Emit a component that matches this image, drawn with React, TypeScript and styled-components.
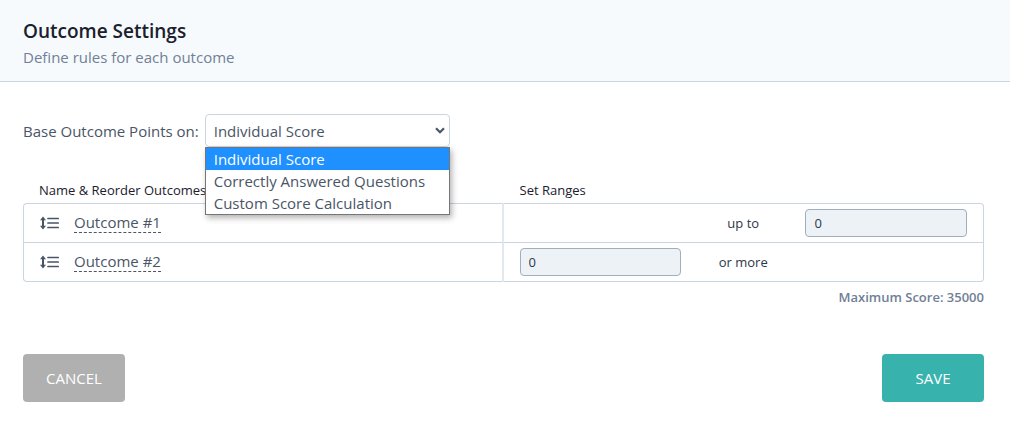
import React, { useState } from "react";
import styled, { createGlobalStyle } from "styled-components";

const GlobalStyle = createGlobalStyle`
  *, *::before, *::after { box-sizing: border-box; }
  body {
    margin: 0;
    background: #fff;
    color: #4a5568;
    font-family: "Segoe UI", "Open Sans", "Noto Sans", sans-serif;
    font-size: 15px;
    line-height: 24px;
  }
  button, input, select { font: inherit; color: inherit; }
`;

const Header = styled.header`
  padding: 18px 24px 12px 23px;
  background: #f6fafd;
  border-bottom: 1px solid #cbd5e0;
`;

const Title = styled.h1`
  margin: 0;
  font-size: 19px;
  line-height: 27px;
  font-weight: 600;
  color: #1a202c;
`;

const Subtitle = styled.p`
  margin: 0;
  color: #718096;
`;

const Content = styled.main`
  padding: 32px 26px 19px 23px;
`;

const Field = styled.div`
  display: flex;
  align-items: center;
  gap: 6px;
`;

const SelectBox = styled.div`
  position: relative;
  width: 245px;
`;

const Select = styled.select`
  display: block;
  appearance: none;
  width: 100%;
  height: 33px;
  padding: 0 24px 0 8px;
  border: 1px solid #cbd5e0;
  border-radius: 4px;
  background: #fff;
  outline: none;
`;

const Chevron = styled.svg`
  position: absolute;
  right: 5px;
  top: 13px;
  pointer-events: none;
`;

const Menu = styled.ul`
  position: absolute;
  z-index: 1;
  top: 100%;
  left: 0;
  right: 0;
  margin: 0;
  padding: 0;
  list-style: none;
  background: #fff;
  border: 1px solid #767676;
  box-shadow: 2px 3px 6px rgba(0, 0, 0, 0.3);
`;

const MenuItem = styled.li<{ $active: boolean }>`
  padding: 0 8px;
  line-height: 22px;
  white-space: nowrap;
  color: ${(p) => (p.$active ? "#fff" : "#4a5568")};
  background: ${(p) => (p.$active ? "#1e90ff" : "#fff")};
`;

const Table = styled.table`
  width: 100%;
  margin-top: 32px;
  table-layout: fixed;
  border-collapse: separate;
  border-spacing: 0;
`;

const HeadCell = styled.th`
  padding: 0 16px 2px;
  height: 24px;
  text-align: left;
  font-size: 13px;
  line-height: 20px;
  font-weight: 500;
  color: #1a202c;
`;

const Row = styled.tr`
  & > td { border-top: 1px solid #cbd5e0; }
  & > td:first-child { border-left: 1px solid #cbd5e0; }
  & > td:last-child { border-right: 1px solid #cbd5e0; }
  &:first-child > td:first-child { border-top-left-radius: 4px; }
  &:first-child > td:last-child { border-top-right-radius: 4px; }
  &:last-child > td { border-bottom: 1px solid #cbd5e0; }
  &:last-child > td:first-child { border-bottom-left-radius: 4px; }
  &:last-child > td:last-child { border-bottom-right-radius: 4px; }
`;

const NameCell = styled.td`
  padding: 0 16px;
  border-right: 2px solid #e2e8f0;
`;

const RangeCell = styled.td`
  padding: 5px 16px;
`;

const Outcome = styled.div`
  display: flex;
  align-items: center;
  gap: 14px;
`;

const HandleIcon = styled.svg`
  display: block;
  flex: none;
`;

const OutcomeName = styled.a`
  color: #4a5568;
  line-height: 19px;
  text-decoration: none;
  border-bottom: 1px dashed #4a5568;
`;

const Range = styled.div`
  display: grid;
  grid-template-columns: 13fr 10fr 13fr;
  align-items: center;
  height: 28px;
  font-size: 13px;
  color: #2d3748;
`;

const RangeText = styled.span`
  grid-column: 2;
  text-align: center;
`;

const RangeInput = styled.input`
  width: 100%;
  min-width: 0;
  height: 28px;
  padding: 0 8px;
  border: 1px solid #a0aec0;
  border-radius: 4px;
  background: #edf2f7;
`;

const MaxScore = styled.p`
  margin: 3px 0 0;
  text-align: right;
  font-size: 13px;
  font-weight: 600;
  color: #718096;
`;

const Actions = styled.div`
  display: flex;
  justify-content: space-between;
  margin-top: 45px;
`;

const Button = styled.button<{ $primary?: boolean }>`
  width: 102px;
  height: 48px;
  border: 0;
  border-radius: 4px;
  color: #fff;
  cursor: pointer;
  background: ${(p) => (p.$primary ? "#38b2ac" : "#b0b0b0")};
`;

const options = ["Individual Score", "Correctly Answered Questions", "Custom Score Calculation"];

const ReorderIcon = () => (
  <HandleIcon width="20" height="14" viewBox="0 0 20 14" fill="none" stroke="#4a5568" aria-hidden="true">
    <path d="M3 2.5v9" strokeWidth="2" />
    <path d="M3 0.5L6 4.2H0zM3 13.5L6 9.8H0z" fill="#4a5568" stroke="none" />
    <path d="M8 2.5H18.2M8 7H18.2M8 11.5H18.2" strokeWidth="1.7" strokeLinecap="round" />
  </HandleIcon>
);

export default function App() {
  const [base, setBase] = useState(options[0]);
  return (
    <>
      <GlobalStyle />
      <Header>
        <Title>Outcome Settings</Title>
        <Subtitle>Define rules for each outcome</Subtitle>
      </Header>
      <Content>
        <Field>
          <label htmlFor="base">Base Outcome Points on:</label>
          <SelectBox>
            <Select id="base" value={base} onChange={(e) => setBase(e.target.value)}>
              {options.map((o) => (
                <option key={o}>{o}</option>
              ))}
            </Select>
            <Chevron width="10" height="7" viewBox="0 0 10 7" fill="none" stroke="#4a5568" strokeWidth="2.2" aria-hidden="true">
              <path d="M1 1.2L5 5.2L9 1.2" />
            </Chevron>
            <Menu role="listbox" aria-label="Base Outcome Points on">
              {options.map((o) => (
                <MenuItem key={o} role="option" aria-selected={o === base} $active={o === base} onClick={() => setBase(o)}>
                  {o}
                </MenuItem>
              ))}
            </Menu>
          </SelectBox>
        </Field>
        <Table>
          <thead>
            <tr>
              <HeadCell scope="col">Name &amp; Reorder Outcomes</HeadCell>
              <HeadCell scope="col">Set Ranges</HeadCell>
            </tr>
          </thead>
          <tbody>
            <Row>
              <NameCell>
                <Outcome>
                  <ReorderIcon />
                  <OutcomeName href="#outcome-1">Outcome #1</OutcomeName>
                </Outcome>
              </NameCell>
              <RangeCell>
                <Range>
                  <RangeText>up to</RangeText>
                  <RangeInput aria-label="Outcome #1 up to" defaultValue="0" />
                </Range>
              </RangeCell>
            </Row>
            <Row>
              <NameCell>
                <Outcome>
                  <ReorderIcon />
                  <OutcomeName href="#outcome-2">Outcome #2</OutcomeName>
                </Outcome>
              </NameCell>
              <RangeCell>
                <Range>
                  <RangeInput aria-label="Outcome #2 minimum" defaultValue="0" />
                  <RangeText>or more</RangeText>
                </Range>
              </RangeCell>
            </Row>
          </tbody>
        </Table>
        <MaxScore>Maximum Score: 35000</MaxScore>
        <Actions>
          <Button type="button">CANCEL</Button>
          <Button type="submit" $primary>SAVE</Button>
        </Actions>
      </Content>
    </>
  );
}
